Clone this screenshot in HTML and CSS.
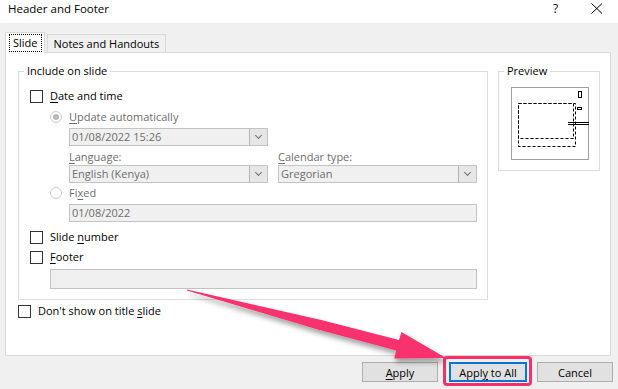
FILE: index.html
```html
<!DOCTYPE html>
<html lang="en">
<head>
    <meta charset="UTF-8">
    <meta name="viewport" content="width=device-width, initial-scale=1.0">
    <title>Header and Footer</title>
    <link rel="stylesheet" href="styles.css">
</head>
<body>
    <div class="titlebar">
        <span class="title">Header and Footer</span>
        <span class="help">?</span>
        <svg class="close" width="12" height="11" viewBox="0 0 12 11">
            <path d="M0.5 0.5 L11 10.5 M11 0.5 L0.5 10.5" stroke="#000" stroke-width="1" fill="none"/>
        </svg>
    </div>

    <div class="tabs">
        <div class="tab active"><span class="focus">Slide</span></div>
        <div class="tab">Notes and Handouts</div>
    </div>

    <div class="panel">
        <div class="groups">
            <fieldset class="group include">
                <legend>Include on slide</legend>

                <label class="check row"><span class="box"></span><span><u>D</u>ate and time</span></label>

                <div class="indent">
                    <label class="radio row disabled"><span class="dot on"></span><span><u>U</u>pdate automatically</span></label>
                    <div class="sub">
                        <div class="combo m3">01/08/2022 15:26<span class="drop"></span></div>
                        <div class="pair m3">
                            <div class="col">
                                <div class="lbl disabled"><u>L</u>anguage:</div>
                                <div class="combo">English (Kenya)<span class="drop"></span></div>
                            </div>
                            <div class="col">
                                <div class="lbl disabled"><u>C</u>alendar type:</div>
                                <div class="combo">Gregorian<span class="drop"></span></div>
                            </div>
                        </div>
                    </div>
                    <label class="radio row disabled m2"><span class="dot"></span><span>Fi<u>x</u>ed</span></label>
                    <div class="sub">
                        <div class="field m3">01/08/2022</div>
                    </div>
                </div>

                <label class="check row m7"><span class="box"></span><span>Slide <u>n</u>umber</span></label>
                <label class="check row m4"><span class="box"></span><span><u>F</u>ooter</span></label>
                <div class="indent">
                    <div class="field tall m4"></div>
                </div>
            </fieldset>

            <fieldset class="group preview">
                <legend>Preview</legend>
                <svg width="78" height="73" viewBox="0 0 78 73">
                    <rect x="0.5" y="0.5" width="77" height="72" fill="#fff" stroke="#a0a0a0"/>
                    <rect x="67.5" y="4.5" width="3" height="6" fill="none" stroke="#000"/>
                    <rect x="66.5" y="20.5" width="4" height="2" fill="none" stroke="#000"/>
                    <rect x="7.5" y="16.5" width="55" height="35" fill="none" stroke="#000" stroke-dasharray="3 2"/>
                    <rect x="7.5" y="16.5" width="57" height="43" fill="none" stroke="#000" stroke-dasharray="3 2"/>
                    <path d="M57 35.5 H78 M57 37.5 H78" stroke="#000"/>
                </svg>
            </fieldset>
        </div>

        <label class="check row title-slide"><span class="box"></span><span>Don't show on title <u>s</u>lide</span></label>
    </div>

    <div class="buttons">
        <button class="btn"><u>A</u>pply</button>
        <button class="btn wide default">Appl<u>y</u> to All</button>
        <button class="btn">Cancel</button>
    </div>

    <svg class="arrow" width="618" height="389" viewBox="0 0 618 389">
        <defs>
            <filter id="shadow" x="-10%" y="-10%" width="130%" height="160%">
                <feDropShadow dx="1" dy="4" stdDeviation="2.5" flood-color="#000" flood-opacity="0.35"/>
            </filter>
        </defs>
        <polygon filter="url(#shadow)" fill="#f7306c"
            points="187,289.6 321.3,320.1 399,340 401.5,332 446,358 394.3,358.5 396.2,350.6 318.7,329.7 187,290.4"/>
    </svg>
</body>
</html>
```

FILE: styles.css
```css
body {
    margin: 0;
    width: 618px;
    height: 389px;
    overflow: hidden;
    position: relative;
    background-color: #f0f0f0;
    font-family: "Open Sans", "Noto Sans", sans-serif;
    font-size: 11px;
    color: #000;
}
u {
    text-decoration-thickness: 1px;
    text-underline-offset: 2px;
}
.titlebar {
    height: 23px;
    background-color: #fff;
    display: flex;
    align-items: flex-start;
    line-height: 18px;
    font-size: 11.5px;
}
.title {
    padding-left: 8px;
    flex: 1;
}
.help {
    width: 12px;
    margin-right: 26px;
    font-size: 12px;
}
.close {
    margin-top: 3px;
    margin-right: 15px;
}

/* tabs */
.tabs {
    display: flex;
    align-items: flex-end;
    margin-top: 9px;
    padding-left: 5px;
    height: 20px;
}
.tab {
    height: 18px;
    box-sizing: border-box;
    border: 1px solid #d9d9d9;
    border-bottom: none;
    padding: 0 6px;
    line-height: 18px;
    margin-left: 2px;
}
.tab.active {
    height: 21px;
    margin-left: 0;
    margin-bottom: -1px;
    padding: 1px 2px 2px 3px;
    background-color: #fff;
    position: relative;
    z-index: 1;
    line-height: 16px;
}
.focus {
    display: block;
    border: 1px dotted #000;
    padding: 0 3px;
}

/* panel */
.panel {
    margin: 0 7px 0 5px;
    height: 304px;
    box-sizing: border-box;
    border: 1px solid #d9d9d9;
    background-color: #fff;
    padding: 11px 10px 0 12px;
}
.groups {
    display: flex;
    gap: 10px;
    align-items: flex-start;
}
.group {
    margin: 0;
    border: 1px solid #dcdcdc;
    display: flex;
    flex-direction: column;
    min-width: 0;
}
.group legend {
    padding: 0 3px;
    line-height: 14px;
}
.include {
    width: 470px;
    box-sizing: border-box;
    padding: 10px 10px 10px 11px;
}
.include legend {
    margin-left: -6px;
}
.preview {
    width: 102px;
    box-sizing: border-box;
    padding: 9px 0 10px 12px;
}
.preview legend {
    margin-left: -7px;
}
.preview svg {
    display: block;
}

.row {
    display: flex;
    align-items: center;
    height: 16px;
    line-height: 16px;
}
.m2 { margin-top: 2px; }
.m3 { margin-top: 3px; }
.m4 { margin-top: 4px; }
.m7 { margin-top: 7px; }

.box {
    width: 13px;
    height: 13px;
    box-sizing: border-box;
    border: 1px solid #333;
    background-color: #fff;
    margin-right: 7px;
    flex-shrink: 0;
}
.dot {
    width: 12px;
    height: 12px;
    box-sizing: border-box;
    border: 1px solid #cccccc;
    border-radius: 50%;
    margin-right: 7px;
    display: flex;
    align-items: center;
    justify-content: center;
}
.dot.on::before {
    content: "";
    width: 6px;
    height: 6px;
    border-radius: 50%;
    background-color: #b8b8b8;
}
.disabled {
    color: #6d6d6d;
}
.indent {
    display: flex;
    flex-direction: column;
    padding-left: 20px;
}
.radio.row {
    margin-top: 5px;
}
.radio.row.m2 {
    margin-top: 2px;
}
.sub {
    display: flex;
    flex-direction: column;
    padding-left: 19px;
}
.pair {
    display: flex;
    gap: 10px;
}
.lbl {
    line-height: 16px;
}
.combo {
    width: 199px;
    height: 18px;
    box-sizing: border-box;
    border: 1px solid #c3c3c3;
    background-color: #f0f0f0;
    color: #6d6d6d;
    line-height: 16px;
    padding-left: 2px;
    display: flex;
    justify-content: space-between;
}
.drop {
    width: 18px;
    box-sizing: border-box;
    border-left: 1px solid #b4b4b4;
    background-color: #e6e6e6;
    position: relative;
}
.drop::after {
    content: "";
    position: absolute;
    left: 6px;
    top: 4px;
    width: 4px;
    height: 4px;
    border-right: 1px solid #707070;
    border-bottom: 1px solid #707070;
    transform: rotate(45deg);
}
.field {
    height: 18px;
    box-sizing: border-box;
    border: 1px solid #c3c3c3;
    background-color: #f0f0f0;
    color: #6d6d6d;
    line-height: 16px;
    padding-left: 2px;
}
.field.tall {
    height: 20px;
}
.include > .indent .sub .field {
    width: 408px;
}
.include > .indent > .field {
    width: 427px;
}
.title-slide {
    margin-top: 3px;
}

/* buttons */
.buttons {
    display: flex;
    justify-content: flex-end;
    margin-top: 6px;
    padding-right: 5px;
}
.btn {
    width: 76px;
    height: 20px;
    margin-left: 10px;
    box-sizing: border-box;
    border: 1px solid #adadad;
    background-color: #e1e1e1;
    font-family: inherit;
    font-size: 11px;
    padding: 0;
    color: #000;
}
.btn.wide {
    width: 78px;
    margin-left: 11px;
}
.btn.default {
    border: 2px solid #0078d7;
    position: relative;
}
.btn.default::after {
    content: "";
    position: absolute;
    top: -8px;
    left: -8px;
    right: -7px;
    bottom: -6px;
    border: 3px solid #f7306c;
    border-radius: 4px;
}

.arrow {
    position: absolute;
    left: 0;
    top: 0;
    pointer-events: none;
}
```
